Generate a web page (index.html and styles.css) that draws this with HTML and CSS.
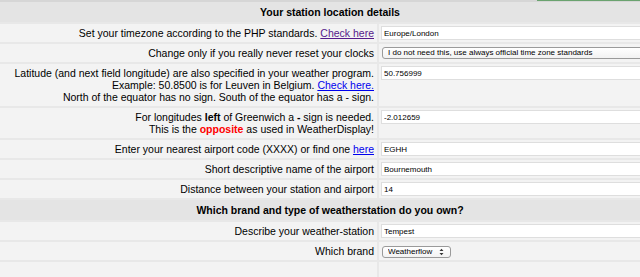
FILE: index.html
```html
<!DOCTYPE html>
<html lang="en">
<head>
    <meta charset="UTF-8">
    <meta name="viewport" content="width=device-width, initial-scale=1.0">
    <title>Station settings</title>
    <link rel="stylesheet" href="styles.css">
</head>
<body>
    <!-- Top strip with progress -->
    <div class="topbar"><div class="progress"></div></div>

    <table class="settings">
        <tr>
            <td class="head" colspan="2">Your station location details</td>
        </tr>
        <tr>
            <td class="label">Set your timezone according to the PHP standards. <a href="#" class="visited">Check here</a></td>
            <td class="field"><input type="text" value="Europe/London"></td>
        </tr>
        <tr>
            <td class="label">Change only if you really never reset your clocks</td>
            <td class="field">
                <select class="wide">
                    <option>I do not need this, use always official time zone standards</option>
                </select>
            </td>
        </tr>
        <tr>
            <td class="label">Latitude (and next field longitude) are also specified in your weather program.<br>
                Example: 50.8500 is for Leuven in Belgium. <a href="#">Check here.</a><br>
                North of the equator has no sign. South of the equator has a - sign.</td>
            <td class="field top"><input type="text" value="50.756999"></td>
        </tr>
        <tr>
            <td class="label">For longitudes <b>left</b> of Greenwich a <b>-</b> sign is needed.<br>
                This is the <b class="warn">opposite</b> as used in WeatherDisplay!</td>
            <td class="field top"><input type="text" value="-2.012659"></td>
        </tr>
        <tr>
            <td class="label">Enter your nearest airport code (XXXX) or find one <a href="#">here</a></td>
            <td class="field"><input type="text" value="EGHH"></td>
        </tr>
        <tr>
            <td class="label">Short descriptive name of the airport</td>
            <td class="field"><input type="text" value="Bournemouth"></td>
        </tr>
        <tr>
            <td class="label">Distance between your station and airport</td>
            <td class="field"><input type="text" value="14"></td>
        </tr>
        <tr>
            <td class="head" colspan="2">Which brand and type of weatherstation do you own?</td>
        </tr>
        <tr>
            <td class="label">Describe your weather-station</td>
            <td class="field"><input type="text" value="Tempest"></td>
        </tr>
        <tr>
            <td class="label">Which brand</td>
            <td class="field">
                <span class="select-wrap">
                    <select class="small">
                        <option>Weatherflow</option>
                    </select>
                    <svg class="arrows" width="5" height="8" viewBox="0 0 5 8">
                        <path d="M0.5 3 L2.5 0.8 L4.5 3 Z M0.5 5 L2.5 7.2 L4.5 5 Z" fill="#333"/>
                    </svg>
                </span>
            </td>
        </tr>
        <tr>
            <td class="label empty">&nbsp;</td>
            <td class="field empty"></td>
        </tr>
        <tr>
            <td class="label">&nbsp;</td>
            <td class="field"></td>
        </tr>
    </table>
</body>
</html>
```

FILE: styles.css
```css
html, body {
    margin: 0;
    padding: 0;
    overflow: hidden;
    background: #f3f3f3;
}

body {
    font-family: 'Liberation Sans', Arial, sans-serif;
    font-size: 10.5px;
    line-height: 12px;
    color: #000;
}

.topbar {
    height: 2px;
    background: #d6d6d6;
    display: flex;
    justify-content: flex-end;
}

.progress {
    width: 103px;
    height: 1px;
    background: #6aa36f;
}

.settings {
    width: 660px;
    border-collapse: separate;
    border-spacing: 0;
}

.settings td {
    background: #f3f3f3;
    border-bottom: 2px solid #e8e8e8;
}

.head {
    background: #e4e4e4 !important;
    font-weight: bold;
    text-align: center;
    padding: 4px 3px;
}

.label {
    width: 371px;
    padding: 3px;
    text-align: right;
    border-right: 2px solid #e8e8e8;
}

.field {
    padding: 2px;
    vertical-align: middle;
}

.field.top {
    vertical-align: top;
}

.empty {
    height: 12px;
}

a {
    color: #0000ee;
}

a.visited {
    color: #551a8b;
}

.warn {
    color: #ff0000;
}

input {
    display: block;
    box-sizing: border-box;
    width: 100%;
    height: 14px;
    margin: 0;
    padding: 0 2px;
    border: 1px solid #dedede;
    background: #fff;
    font-family: 'Liberation Sans', Arial, sans-serif;
    font-size: 8px;
    color: #000;
    outline: none;
}

select {
    -webkit-appearance: none;
    appearance: none;
    box-sizing: border-box;
    height: 12px;
    margin: 0 0 0 1px;
    padding: 0 0 0 5px;
    border: 1px solid #9a9a9a;
    border-radius: 3px;
    background: linear-gradient(#ffffff, #f2f2f2);
    font-family: 'Liberation Sans', Arial, sans-serif;
    font-size: 8px;
    line-height: 10px;
    color: #000;
    display: block;
}

select.wide {
    width: 100%;
}

.select-wrap {
    position: relative;
    display: inline-block;
    vertical-align: middle;
}

select.small {
    width: 69px;
}

.arrows {
    position: absolute;
    right: 7px;
    top: 2px;
    pointer-events: none;
}
```
